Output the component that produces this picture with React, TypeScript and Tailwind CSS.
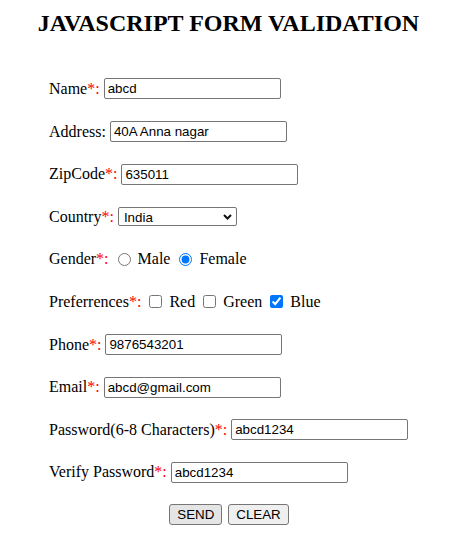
import React from 'react';

const serif = "font-['Liberation_Serif','Times_New_Roman',serif]";
const sans = "font-['Liberation_Sans',Arial,sans-serif]";

function Label({ text, required = true }: { text: string; required?: boolean }) {
  return (
    <span className="whitespace-nowrap">
      {text}
      {required ? <span className="text-[#ff0000]">*:</span> : ':'}
    </span>
  );
}

function TextField({ value, type = 'text' }: { value: string; type?: string }) {
  return (
    <input
      type={type === 'password' ? 'text' : type}
      defaultValue={value}
      className={`${sans} ml-[4px] w-[177px] h-[21px] border border-[#767676] rounded-[2px] bg-white px-[3px] text-[13.333px] text-black outline-none`}
    />
  );
}

function Row({ children }: { children: React.ReactNode }) {
  return <div className="flex items-center h-[42.6px] pl-[49px]">{children}</div>;
}

export default function App() {
  return (
    <div className={`${serif} w-[464px] h-[555px] bg-white text-black text-[16px] overflow-hidden`}>
      {/* Title */}
      <div className="h-[67.7px] pt-[9px] pr-[7px]">
        <h2 className="text-center text-[24px] leading-[28px] font-bold">JAVASCRIPT FORM VALIDATION</h2>
      </div>

      <form onSubmit={e => e.preventDefault()}>
        <Row>
          <Label text="Name" />
          <TextField value="abcd" />
        </Row>
        <Row>
          <Label text="Address" required={false} />
          <TextField value="40A Anna nagar" />
        </Row>
        <Row>
          <Label text="ZipCode" />
          <TextField value="635011" />
        </Row>
        <Row>
          <Label text="Country" />
          <span className="relative ml-[4px] inline-flex">
            <select
              defaultValue="India"
              className={`${sans} appearance-none w-[119px] h-[19px] border border-[#767676] rounded-[2px] bg-white pl-[5px] text-[13.333px] text-black outline-none`}
            >
              <option>Select</option>
              <option>India</option>
              <option>USA</option>
              <option>UK</option>
            </select>
            <svg className="absolute right-[5px] top-[7px] pointer-events-none" width="9" height="6" viewBox="0 0 9 6">
              <path d="M1 1 L4.5 4.5 L8 1" fill="none" stroke="#111" strokeWidth="2" />
            </svg>
          </span>
        </Row>
        <Row>
          <Label text="Gender" />
          <input type="radio" name="gender" className="ml-[9px] mr-[3px] w-[13px] h-[13px]" />
          <span className="ml-[4px]">Male</span>
          <input type="radio" name="gender" defaultChecked className="ml-[9px] mr-[3px] w-[13px] h-[13px]" />
          <span className="ml-[4px]">Female</span>
        </Row>
        <Row>
          <Label text="Preferrences" />
          <input type="checkbox" className="ml-[8px] mr-[3px] w-[13px] h-[13px]" />
          <span className="ml-[4px]">Red</span>
          <input type="checkbox" className="ml-[8px] mr-[3px] w-[13px] h-[13px]" />
          <span className="ml-[4px]">Green</span>
          <input type="checkbox" defaultChecked className="ml-[8px] mr-[3px] w-[13px] h-[13px]" />
          <span className="ml-[4px]">Blue</span>
        </Row>
        <Row>
          <Label text="Phone" />
          <TextField value="9876543201" />
        </Row>
        <Row>
          <Label text="Email" />
          <TextField value="abcd@gmail.com" />
        </Row>
        <Row>
          <Label text="Password(6-8 Characters)" />
          <TextField value="abcd1234" />
        </Row>
        <Row>
          <Label text="Verify Password" />
          <TextField value="abcd1234" />
        </Row>

        <div className="flex items-center justify-center gap-[6px] h-[42px] pr-[6px]">
          <button
            type="submit"
            className={`${sans} h-[21px] px-[7px] border border-[#767676] rounded-[3px] bg-[#e5e5e5] text-[13.333px] text-black`}
          >
            SEND
          </button>
          <button
            type="reset"
            className={`${sans} h-[21px] px-[7px] border border-[#767676] rounded-[3px] bg-[#efefef] text-[13.333px] text-black`}
          >
            CLEAR
          </button>
        </div>
      </form>
    </div>
  );
}
